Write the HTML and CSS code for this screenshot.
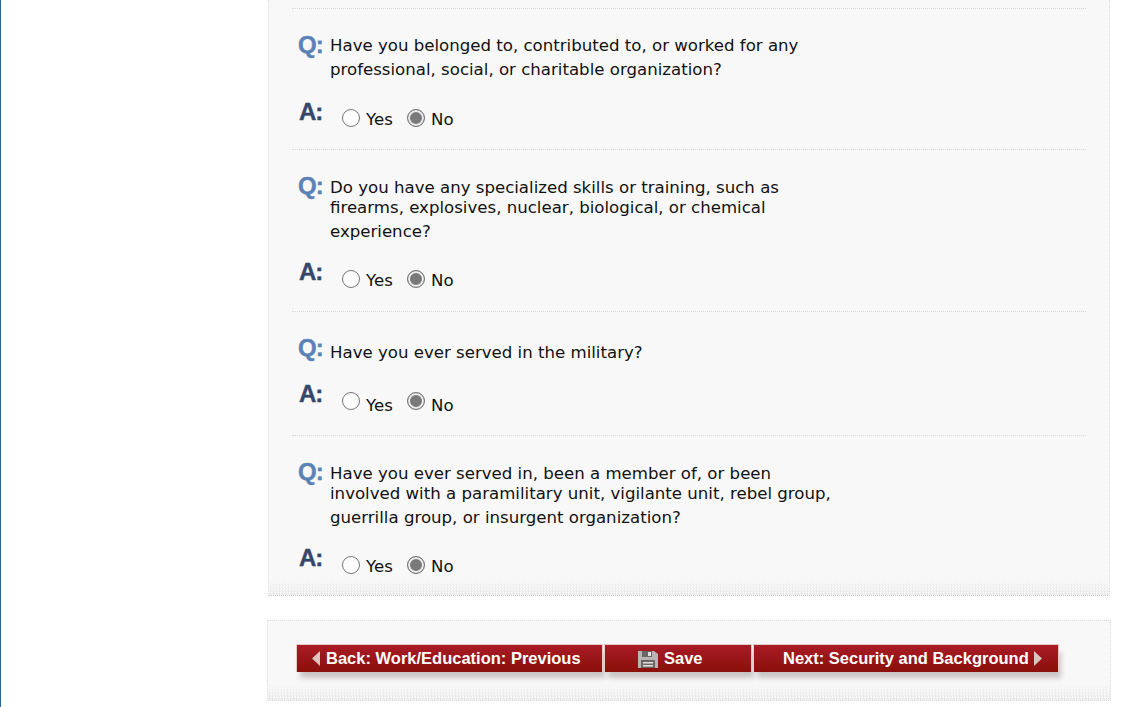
FILE: index.html
```html
<html><head>
    <title>Additional Work/Education/Training Information</title>
    <meta name="viewport" content="width=device-width, initial-scale=1">
    <link rel="icon" href="data:,">
    <link rel="stylesheet" href="styles.css">
    </head>
    <body>
    <div class="page">
        <div class="panel">
            <div class="qa qa1">
                <div class="row q-row"><span class="mark q">Q:</span>
                    <p class="question"><span class="wide">Have you belonged to, contributed to, or worked for any</span><span class="wide">professional, social, or charitable organization?</span></p></div>
                <div class="row a-row"><span class="mark a">A:</span>
                    <label class="choice"><input type="radio" name="a1">Yes</label>
                    <label class="choice"><input type="radio" name="a1" checked>No</label></div>
            </div>
            <div class="qa qa2">
                <div class="row q-row"><span class="mark q">Q:</span>
                    <p class="question"><span>Do you have any specialized skills or training, such as</span><span>firearms, explosives, nuclear, biological, or chemical</span><span class="tall">experience?</span></p></div>
                <div class="row a-row"><span class="mark a">A:</span>
                    <label class="choice"><input type="radio" name="a2">Yes</label>
                    <label class="choice"><input type="radio" name="a2" checked>No</label></div>
            </div>
            <div class="qa qa3">
                <div class="row q-row"><span class="mark q">Q:</span>
                    <p class="question"><span class="wide">Have you ever served in the military?</span></p></div>
                <div class="row a-row raised"><span class="mark a">A:</span>
                    <label class="choice"><input type="radio" name="a3">Yes</label>
                    <label class="choice"><input type="radio" name="a3" checked>No</label></div>
            </div>
            <div class="qa qa4">
                <div class="row q-row"><span class="mark q">Q:</span>
                    <p class="question"><span>Have you ever served in, been a member of, or been</span><span>involved with a paramilitary unit, vigilante unit, rebel group,</span><span class="tall">guerrilla group, or insurgent organization?</span></p></div>
                <div class="row a-row"><span class="mark a">A:</span>
                    <label class="choice"><input type="radio" name="a4">Yes</label>
                    <label class="choice"><input type="radio" name="a4" checked>No</label></div>
            </div>
        </div>
        <div class="nav-panel">
            <div class="buttons">
                <a class="button back" href="#"><svg class="arrow" width="8" height="15" viewBox="0 0 8 15"><path d="M8 0V15L0 7.5Z"/></svg>Back: Work/Education: Previous</a>
                <a class="button save" href="#"><svg class="disk" width="20" height="18" viewBox="0 0 20 18"><path fill="#b9b5b5" d="M0 1H16L20 4V18H0Z"/><path fill="#6b6666" d="M4 1H14V7H4ZM3 10H17V18H3Z"/><path fill="#e4e1e1" d="M10 2H13V6H10ZM5 12H15V13.5H5ZM5 15H15V16.5H5Z"/></svg>Save</a>
                <a class="button next" href="#">Next: Security and Background<svg class="arrow" width="8" height="15" viewBox="0 0 8 15"><path d="M0 0V15L8 7.5Z"/></svg></a>
            </div>
        </div>
    </div>
    </body>
    </html>
```

FILE: styles.css
```css
html {
    background-color: white;
}
body {
    margin: 0;
    height: 707px;
    overflow: hidden;
    font-family: "DejaVu Sans", Verdana, sans-serif;
    font-size: 16.6px;
    color: #111;
}
.page {
    border-left: 1px solid #2f6690;
    height: 707px;
    padding-left: 267px;
    width: 842px;
}
.panel {
    background-color: #f8f8f8;
    border-left: 1px dotted #ddd;
    border-right: 1px dotted #ddd;
    border-bottom: 1px dotted #ccc;
    height: 596px;
    padding: 8px 23px 0 23px;
    box-sizing: border-box;
    position: relative;
}
.panel::after, .nav-panel::after {
    content: "";
    position: absolute;
    left: 0;
    right: 0;
    bottom: 0;
    height: 16px;
    background-image: repeating-conic-gradient(#e6e6e6 0 25%, transparent 0 50%);
    background-size: 3px 3px;
    -webkit-mask-image: linear-gradient(transparent, black);
}
.qa {
    border-top: 1px dotted #d8d8d8;
}
.qa1 { height: 140px; }
.qa2 { height: 161px; }
.qa3 { height: 123px; }
.row {
    display: flex;
    padding-left: 6px;
}
.q-row { padding-top: 28px; }
.qa1 .q-row { padding-top: 25px; }
.qa3 .q-row { padding-top: 29px; }
.mark {
    font-family: "Liberation Sans", Arial, sans-serif;
    font-weight: bold;
    font-size: 24px;
    line-height: 24px;
    width: 32px;
    letter-spacing: -1px;
    -webkit-text-stroke: 0.4px currentColor;
}
.q {
    color: #5b82b5;
    margin-top: -4px;
}
.qa1 .q { margin-top: -1px; }
.qa3 .q { margin-top: -5px; }
.a {
    color: #36476b;
    margin-left: 1px;
    width: 31px;
}
.question {
    margin: 0;
}
.question span {
    display: block;
    line-height: 20px;
}
.question .wide {
    line-height: 24px;
}
.question .tall {
    line-height: 28px;
}
.a-row {
    margin-top: 14px;
    align-items: flex-start;
}
.qa1 .a-row { margin-top: 18px; }
.qa3 .a-row { margin-top: 17px; }
.choice {
    display: flex;
    align-items: center;
    margin: 5px 0 0 12px;
    width: 65px;
    height: 24px;
    padding-top: 3px;
}
.qa1 .choice { margin-top: 4px; }
.raised .choice { margin-top: 8px; }
.choice + .choice { margin-left: 0; }
.choice input {
    appearance: none;
    width: 18px;
    height: 18px;
    margin: -2px 6px 0 0;
    border: 1px solid #767676;
    border-radius: 50%;
    background: white;
    flex: none;
}
.choice input:checked {
    background: #7a7a7a;
    box-shadow: inset 0 0 0 2px #eee;
}
.raised .choice input { margin-top: -8px; }
.nav-panel {
    background-color: #f8f8f8;
    border: 1px dotted #ddd;
    margin: 24px -1px 0 -1px;
    height: 81px;
    box-sizing: border-box;
    padding: 23px 0 0 28px;
    position: relative;
}
.buttons {
    display: flex;
    position: relative;
    z-index: 1;
}
.button {
    display: flex;
    align-items: center;
    box-sizing: border-box;
    height: 28px;
    margin-right: 1px;
    background: linear-gradient(#a81c26, #8a0f0a);
    border: 1px solid #e6caca;
    border-bottom: 0;
    box-shadow: 3px 7px 5px -1px #c9c5c5;
    color: white;
    font-family: "Liberation Sans", Arial, sans-serif;
    font-weight: bold;
    font-size: 16.5px;
    text-decoration: none;
}
.arrow {
    fill: #dcc4c0;
}
.back {
    width: 307px;
    padding-left: 15px;
}
.back .arrow { margin-right: 6px; }
.save {
    width: 148px;
    padding-left: 33px;
}
.disk { margin-right: 6px; }
.next {
    width: 306px;
    padding-left: 29px;
    margin-right: 0;
}
.next .arrow { margin-left: 5px; }
```
